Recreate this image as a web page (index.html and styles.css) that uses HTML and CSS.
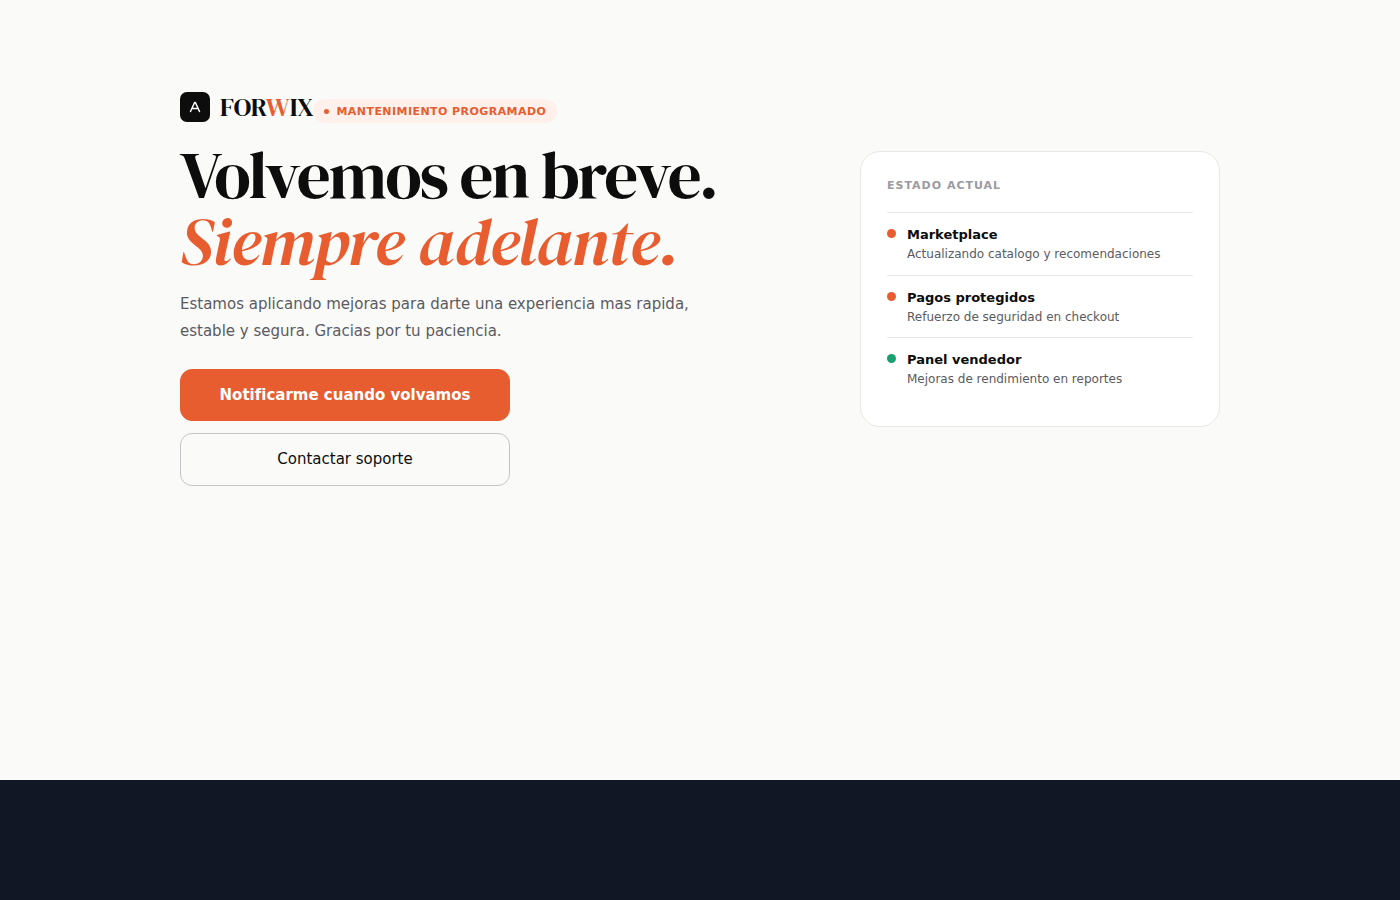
FILE: index.html
```html
<!DOCTYPE html>
<html lang="es">
<head>
<meta charset="utf-8">
<meta name="viewport" content="width=device-width, initial-scale=1">
<title>Forwix – Mantenimiento</title>
<link rel="stylesheet" href="styles.css">
</head>
<body>
<main class="page">
  <div class="shell">
    <header class="topline">
      <div class="brand">
        <span class="brand-mark">
          <svg width="14" height="14" viewBox="0 0 14 14" fill="none" stroke="#fff" stroke-width="1.5" stroke-linecap="round" stroke-linejoin="round" aria-hidden="true"><path d="M2.500 11.500 6.600 2.500h.8L11.500 11.500M4.300 8.500h5.400"/></svg>
        </span>
        <span class="brand-name">FOR<span class="accent">W</span>IX</span>
      </div>
      <div class="badge"><span class="badge-dot"></span>MANTENIMIENTO PROGRAMADO</div>
    </header>
    <div class="columns">
      <section class="intro">
        <h1 class="title">Volvemos en breve.<br><em class="accent">Siempre adelante.</em></h1>
        <p class="lead">Estamos aplicando mejoras para darte una experiencia mas rapida, estable y segura. Gracias por tu paciencia.</p>
        <div class="actions">
          <button class="btn btn-primary" type="button">Notificarme cuando volvamos</button>
          <button class="btn btn-outline" type="button">Contactar soporte</button>
        </div>
      </section>
      <aside class="card">
        <h2 class="card-title">ESTADO ACTUAL</h2>
        <ul class="status-list">
          <li class="status"><span class="dot"></span><div><h3 class="status-name">Marketplace</h3><p class="status-text">Actualizando catalogo y recomendaciones</p></div></li>
          <li class="status"><span class="dot"></span><div><h3 class="status-name">Pagos protegidos</h3><p class="status-text">Refuerzo de seguridad en checkout</p></div></li>
          <li class="status"><span class="dot dot-ok"></span><div><h3 class="status-name">Panel vendedor</h3><p class="status-text">Mejoras de rendimiento en reportes</p></div></li>
        </ul>
      </aside>
    </div>
  </div>
</main>
<footer class="footer"></footer>
</body>
</html>
```
FILE: styles.css
```css
* { box-sizing: border-box; }
body {
  margin: 0;
  min-height: 100vh;
  display: flex;
  flex-direction: column;
  background: #fafaf8;
  color: #0d0d0d;
  font-family: "DejaVu Sans", sans-serif;
}
h1, h2, h3, p, ul { margin: 0; padding: 0; }
.page { flex: 1; padding: 92px 24px 48px; }
.shell { max-width: 1040px; margin: 0 auto; }
.accent { color: #e85d30; }
.topline { display: flex; flex-wrap: wrap; align-items: flex-end; margin-bottom: 18px; }
.brand { display: flex; align-items: center; gap: 10px; height: 31px; padding-bottom: 1px; }
.brand-mark {
  display: flex;
  align-items: center;
  justify-content: center;
  width: 30px;
  height: 30px;
  border-radius: 7px;
  background: #0d0d0d;
}
.brand-name {
  font: 26px/30px "DM Serif Display", "Liberation Serif", serif;
}
.badge {
  display: flex;
  align-items: center;
  gap: 7px;
  padding: 1px 11px 0;
  border-radius: 12px;
  background: #fff0ec;
  color: #e85d30;
  font-size: 11px;
  font-weight: bold;
  line-height: 23px;
  letter-spacing: 0.04em;
}
.badge-dot { width: 5px; height: 5px; border-radius: 50%; background: #e85d30; }
.columns {
  display: grid;
  grid-template-columns: minmax(0, 1fr) 360px;
  gap: 80px;
  align-items: start;
}
.title {
  font: 67px/67px "DM Serif Display", "Liberation Serif", serif;
  letter-spacing: -2px;
}
.title em { letter-spacing: -1px; }
.lead {
  max-width: 520px;
  margin-top: 16px;
  color: #5a5a62;
  font-size: 15px;
  line-height: 27px;
}
.actions {
  display: flex;
  flex-direction: column;
  gap: 12px;
  max-width: 330px;
  margin-top: 24px;
}
.btn {
  padding: 0 24px;
  border: 1px solid #e85d30;
  border-radius: 12px;
  font: 15px/50px "DejaVu Sans", sans-serif;
  cursor: pointer;
}
.btn-primary { background: #e85d30; color: #fff; font-weight: bold; }
.btn-outline { padding-bottom: 1px; border-color: #c4c4c4; background: transparent; color: #0d0d0d; }
.card {
  margin-top: 10px;
  padding: 24px 26px 26px;
  border: 1px solid #e8e8e4;
  border-radius: 20px;
  background: #fff;
}
.card-title {
  margin-bottom: 16px;
  color: #9a9aa2;
  font-size: 11px;
  line-height: 20px;
  letter-spacing: 1px;
}
.status-list { list-style: none; }
.status {
  display: flex;
  gap: 11px;
  padding: 12px 0;
  border-top: 1px solid #e8e8e8;
}
.status:nth-child(2) { padding-bottom: 11px; }
.dot { flex: none; width: 9px; height: 9px; margin-top: 4px; border-radius: 50%; background: #e85d30; }
.dot-ok { background: #18a070; }
.status-name { font-size: 13px; line-height: 20px; }
.status-text { color: #5a5a62; font-size: 12px; line-height: 18px; }
.footer { height: 120px; background: #111725; }
```
